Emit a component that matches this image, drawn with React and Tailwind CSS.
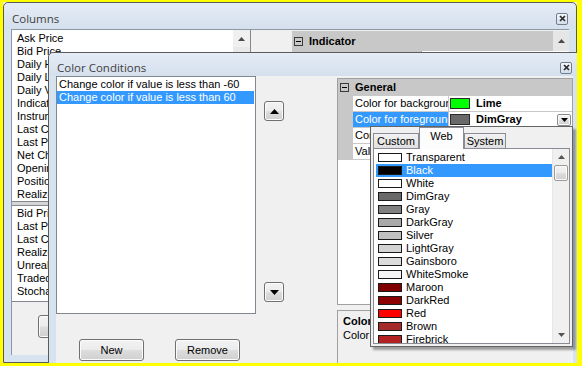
import React from "react";

const sans = "font-['Liberation_Sans',Arial,sans-serif]";
const ui = "font-['Open_Sans','Noto_Sans',sans-serif]";

function UpTri({ w = 7, h = 4, c = "#000" }) {
  return (
    <svg width={w} height={h} viewBox={`0 0 ${w} ${h}`}>
      <path d={`M0 ${h}L${w / 2} 0L${w} ${h}Z`} fill={c} />
    </svg>
  );
}
function DownTri({ w = 7, h = 4, c = "#000" }) {
  return (
    <svg width={w} height={h} viewBox={`0 0 ${w} ${h}`}>
      <path d={`M0 0L${w / 2} ${h}L${w} 0Z`} fill={c} />
    </svg>
  );
}

function Close() {
  return (
    <div className="w-[12px] h-[12px] border border-[#6f7d8f] rounded-[2px] bg-gradient-to-b from-[#f5f8fb] to-[#d3dde9] flex items-center justify-center">
      <svg width="7" height="7" viewBox="0 0 7 7">
        <path d="M1 1L6 6M6 1L1 6" stroke="#2a2a2a" strokeWidth="1.7" />
      </svg>
    </div>
  );
}

function MinusBox() {
  return (
    <div className="w-[9px] h-[9px] border border-[#3a3a3a] flex items-center justify-center">
      <div className="w-[5px] h-[1px] bg-[#000]" />
    </div>
  );
}

const btnBg =
  "bg-[linear-gradient(to_bottom,#f3f3f3_0%,#ebebeb_48%,#dddddd_52%,#cfcfcf_100%)] shadow-[inset_0_0_0_1px_#fbfbfb]";

const colsList1 = [
  "Ask Price",
  "Bid Price",
  "Daily High",
  "Daily Low",
  "Daily Volume",
  "Indicator",
  "Instrument",
  "Last Close",
  "Last Price",
  "Net Change",
  "Opening Price",
  "Position",
  "Realized PnL",
];
const colsList2 = [
  "Bid Price",
  "Last Price",
  "Last Close",
  "Realized PnL",
  "Unrealized PnL",
  "Traded Volume",
  "Stochastics",
];

const webColors = [
  ["Transparent", "#ffffff"],
  ["Black", "#000000"],
  ["White", "#ffffff"],
  ["DimGray", "#696969"],
  ["Gray", "#808080"],
  ["DarkGray", "#a9a9a9"],
  ["Silver", "#c0c0c0"],
  ["LightGray", "#d3d3d3"],
  ["Gainsboro", "#dcdcdc"],
  ["WhiteSmoke", "#f5f5f5"],
  ["Maroon", "#800000"],
  ["DarkRed", "#8b0000"],
  ["Red", "#ff0000"],
  ["Brown", "#a52a2a"],
  ["Firebrick", "#b22222"],
];

function PropRow({ name, swatch, value, selected, dropdown }) {
  return (
    <div className="h-[16px] flex shrink-0">
      <div className="w-[15px] bg-[#c8c8c8]" />
      <div
        className={`w-[96px] border-b border-r border-[#c8c8c8] pl-[2px] leading-[15px] whitespace-nowrap overflow-hidden ${
          selected ? "bg-[#3399ff] text-white" : ""
        }`}
      >
        {name}
      </div>
      <div className="flex-1 border-b border-[#c8c8c8] flex items-center pl-[1px]">
        {swatch && (
          <div
            className="w-[20px] h-[11px] border border-[#2a2a2a]"
            style={{ backgroundColor: swatch }}
          />
        )}
        {value && <span className="ml-[6px] font-bold leading-[15px]">{value}</span>}
        {dropdown && (
          <div
            className={`ml-auto mr-[1px] w-[14px] h-[12px] border border-[#8a8a8a] rounded-[2px] ${btnBg} flex items-center justify-center`}
          >
            <DownTri w={7} h={4} />
          </div>
        )}
      </div>
    </div>
  );
}

export default function App() {
  return (
    <div
      className={`relative w-[582px] h-[366px] overflow-hidden bg-[#f0f0f0] ${sans} text-[11px] text-black`}
    >
      {/* Columns window */}
      <div className="absolute left-[3px] top-[2px] w-[574px] h-[361px] border border-[#5b5b5b] rounded-t-[5px] bg-[#d8e3f0] flex flex-col">
        <div className="h-[26px] shrink-0 flex items-center justify-between pl-[8px] pr-[8px] pt-[5px] rounded-t-[5px] bg-gradient-to-b from-[#e4ecf6] to-[#d5e0ed]">
          <span className={`${ui} text-[11.5px] text-[#3f3f3f]`}>Columns</span>
          <Close />
        </div>
        <div className="flex-1 mx-[7px] mb-[7px] border-l border-t border-[#8d98a6] bg-[#f0f0f0] flex">
          <div className="w-[239px] flex flex-col">
            <div className="h-[172px] bg-white border-b border-r border-[#828790] flex">
              <div className="flex-1 pt-[2px] pl-[5px]">
                {colsList1.map((t, i) => (
                  <div key={i} className="h-[13px] leading-[13px] whitespace-nowrap">
                    {t}
                  </div>
                ))}
              </div>
              <div className="w-[17px] bg-[#e9e9e9] flex flex-col">
                <div className="h-[17px] bg-[#f0f0f0] flex items-center justify-center">
                  <UpTri c="#4a4a4a" />
                </div>
              </div>
            </div>
            <div className="h-[3px] bg-[#d6d6d6]" />
            <div className="h-[97px] bg-white border-y border-r border-[#828790] pt-[1px] pl-[5px]">
              {colsList2.map((t, i) => (
                <div key={i} className="h-[13px] leading-[13px] whitespace-nowrap">
                  {t}
                </div>
              ))}
            </div>
            <div
              className={`mt-[13px] ml-[26px] w-[75px] h-[23px] border border-[#707070] rounded-[3px] ${btnBg}`}
            />
          </div>
          <div className="w-[41px]" />
          <div className="flex-1 flex flex-col mt-[1px]">
            <div className="h-[20px] bg-[#c8c8c8] flex items-center">
              <div className="ml-[2px]">
                <MinusBox />
              </div>
              <span className="ml-[6px] font-bold">Indicator</span>
              <div className="ml-auto w-[16px] h-full bg-[#e6e6e6] flex items-center justify-center">
                <UpTri c="#4a4a4a" />
              </div>
            </div>
            <div className="h-[20px] flex">
              <div className="w-[130px] bg-[#c8c8c8] border-r border-[#a0a0a0]" />
              <div className="flex-1 bg-white" />
            </div>
          </div>
        </div>
      </div>

      {/* Color Conditions dialog */}
      <div className="absolute left-[48px] top-[52px] w-[533px] h-[330px] border border-[#5b5b5b] rounded-t-[5px] bg-[#d8e3f0] flex flex-col">
        <div className="h-[23px] shrink-0 flex items-center justify-between pl-[8px] pr-[8px] pt-[6px] rounded-t-[5px] bg-gradient-to-b from-[#e4ecf6] to-[#d5e0ed]">
          <span className={`${ui} text-[11.5px] text-[#3f3f3f]`}>Color Conditions</span>
          <Close />
        </div>
        <div className="flex-1 mx-[7px] bg-[#f0f0f0] flex">
          {/* left */}
          <div className="w-[200px] flex flex-col">
            <div className="h-[238px] border border-[#828790] bg-white pt-[1px]">
              <div className="h-[13px] leading-[13px] pl-[2px] whitespace-nowrap">
                Change color if value is less than -60
              </div>
              <div className="h-[13px] leading-[13px] pl-[2px] mr-[1px] whitespace-nowrap bg-[#3399ff] text-white">
                Change color if value is less than 60
              </div>
            </div>
            <div className="flex mt-[25px] pl-[23px] gap-[31px]">
              <div
                className={`w-[65px] h-[22px] border border-[#707070] rounded-[3px] ${btnBg} flex items-center justify-center`}
              >
                New
              </div>
              <div
                className={`w-[65px] h-[22px] border border-[#707070] rounded-[3px] ${btnBg} flex items-center justify-center`}
              >
                Remove
              </div>
            </div>
          </div>
          {/* middle */}
          <div className="w-[81px] flex flex-col pl-[8px]">
            <div
              className={`mt-[25px] w-[20px] h-[20px] border border-[#707070] rounded-[3px] ${btnBg} flex items-center justify-center`}
            >
              <UpTri w={9} h={5} />
            </div>
            <div
              className={`mt-[161px] w-[20px] h-[20px] border border-[#707070] rounded-[3px] ${btnBg} flex items-center justify-center`}
            >
              <DownTri w={9} h={5} />
            </div>
          </div>
          {/* right */}
          <div className="w-[236px] flex flex-col">
            <div className="mt-[2px] h-[227px] shrink-0 bg-white border border-[#a0a0a0] flex flex-col">
              <div className="h-[17px] shrink-0 bg-[#c8c8c8] flex items-center">
                <div className="ml-[2px]">
                  <MinusBox />
                </div>
                <span className="ml-[6px] font-bold">General</span>
              </div>
              <PropRow name="Color for background" swatch="#00ff00" value="Lime" />
              <PropRow name="Color for foreground" swatch="#696969" value="DimGray" selected dropdown />
              <PropRow name="Condition" />
              <PropRow name="Value" />
            </div>
            <div className="mt-[5px] flex-1 border-t border-l border-[#a0a0a0] pl-[5px] pt-[3px]">
              <div className="font-bold leading-[14px] whitespace-nowrap">Color for foreground</div>
              <div className="leading-[14px] whitespace-nowrap">Color for the text of the cell</div>
            </div>
          </div>
        </div>
      </div>

      {/* Color dropdown popup */}
      <div className="absolute left-[370px] top-[126px] w-[203px] h-[221px] border border-[#646464] bg-[#f0f0f0] shadow-[3px_3px_2px_rgba(0,0,0,0.35)] flex flex-col">
        <div className="h-[21px] shrink-0 flex items-end pl-[2px] relative z-10">
          <div className="w-[46px] h-[15px] border border-b-0 border-[#898c95] bg-gradient-to-b from-[#f2f2f2] to-[#e0e0e0] flex items-center justify-center leading-[13px]">
            Custom
          </div>
          <div className="w-[45px] h-[22px] -mb-px border border-b-0 border-[#898c95] bg-[#fcfcfc] flex items-start justify-center pt-[2px] leading-[13px]">
            Web
          </div>
          <div className="w-[42px] h-[15px] border border-b-0 border-[#898c95] bg-gradient-to-b from-[#f2f2f2] to-[#e0e0e0] flex items-center justify-center leading-[13px]">
            System
          </div>
        </div>
        <div className="mx-[2px] h-[196px] shrink-0 border border-[#898c95] bg-white flex overflow-hidden">
          <div className="flex-1 pt-[2px] pl-[2px] overflow-hidden">
            {webColors.map(([n, c], i) => (
              <div
                key={n}
                className={`h-[13px] flex items-center whitespace-nowrap ${
                  i === 1 ? "bg-[#3399ff] text-white" : ""
                }`}
              >
                <div
                  className="ml-[2px] w-[24px] h-[9px] border border-[#1a1a1a]"
                  style={{ backgroundColor: c }}
                />
                <span className="ml-[4px] leading-[13px]">{n}</span>
              </div>
            ))}
          </div>
          <div className="w-[17px] bg-[#f0f0f0] flex flex-col border-l border-[#e6e6e6]">
            <div className="h-[16px] flex items-center justify-center">
              <UpTri c="#555" />
            </div>
            <div
              className={`h-[16px] mx-[1px] border border-[#9b9b9b] rounded-[2px] ${btnBg}`}
            />
            <div className="flex-1" />
            <div className="h-[17px] flex items-center justify-center">
              <DownTri c="#555" />
            </div>
          </div>
        </div>
      </div>

      {/* yellow highlight frame */}
      <div className="absolute inset-0 border-t-[2px] border-l-[3px] border-r-[5px] border-b-[3px] border-[#ffff00] pointer-events-none z-50" />
    </div>
  );
}
